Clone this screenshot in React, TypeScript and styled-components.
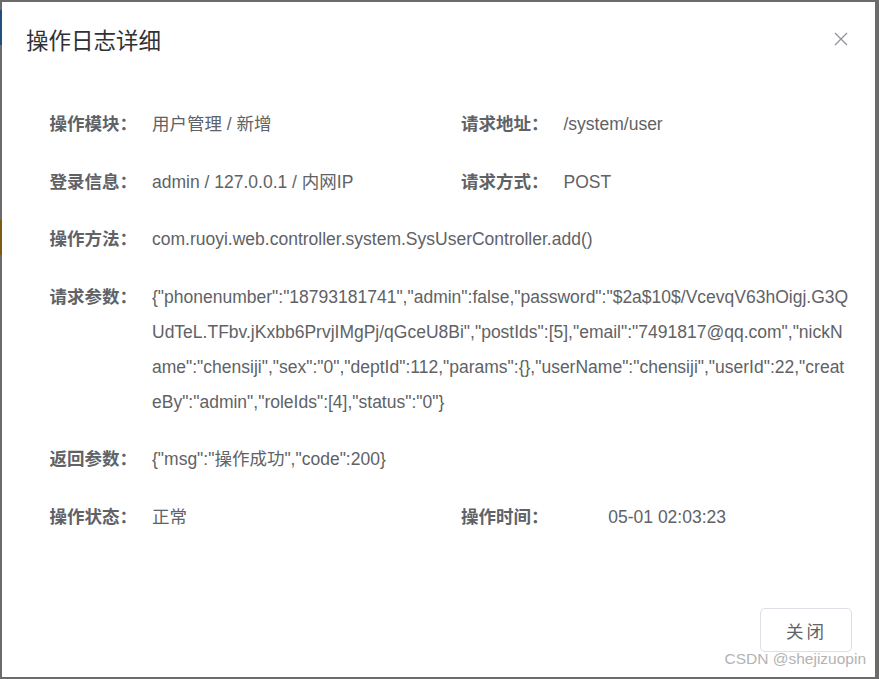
import styled, { createGlobalStyle } from 'styled-components';

const GlobalStyle = createGlobalStyle`
  html, body {
    margin: 0;
    padding: 0;
    background: #6b6b6b;
  }
  * {
    box-sizing: border-box;
  }
`;

const Overlay = styled.div`
  width: 879px;
  height: 679px;
  padding: 2px 4px 2px 2px;
  background:
    linear-gradient(
        to bottom,
        #6b6b6b 0 10px,
        #234f7c 10px 45px,
        #6b6b6b 45px 220px,
        #7d5c12 220px 255px,
        #6b6b6b 255px
      )
      left top / 2px 100% no-repeat,
    #6b6b6b;
`;

const Dialog = styled.div`
  position: relative;
  height: 100%;
  background: #fff;
  display: flex;
  flex-direction: column;
  font-family: 'Liberation Sans', 'Noto Sans CJK SC', sans-serif;
  color: #606266;
`;

const Header = styled.div`
  display: flex;
  justify-content: space-between;
  align-items: flex-start;
  padding: 25px 27px 12.5px 24px;
`;

const Title = styled.span`
  font-size: 22.5px;
  line-height: 30px;
  color: #303133;
`;

const CloseButton = styled.button`
  border: none;
  background: none;
  padding: 0;
  margin-top: 5px;
  width: 14px;
  height: 14px;
  display: flex;
  cursor: pointer;
`;

const Body = styled.div`
  padding: 37.5px 25px 15px;
  display: grid;
  grid-template-columns: 1fr 1fr;
  row-gap: 22.5px;
`;

const FormItem = styled.div<{ $full?: boolean }>`
  display: flex;
  grid-column: ${({ $full }) => ($full ? '1 / span 2' : 'auto')};
  font-size: 17.5px;
  line-height: 35px;
`;

const Label = styled.div`
  flex: 0 0 125px;
  padding-right: 15px;
  text-align: right;
  font-weight: 700;
  color: #606266;
`;

const Value = styled.div`
  flex: 1;
  min-width: 0;
  word-break: break-all;
`;

const Masked = styled.span`
  color: #fff;
`;

const Footer = styled.div`
  display: flex;
  justify-content: flex-end;
  padding: 0 23px;
  margin-top: auto;
  margin-bottom: 25px;
`;

const Button = styled.button`
  height: 44px;
  padding: 0 24px 0 25px;
  font-size: 17.5px;
  font-family: 'Liberation Sans', 'Noto Sans CJK SC', sans-serif;
  color: #606266;
  background: #fff;
  border: 1px solid #dcdfe6;
  border-radius: 5px;
  letter-spacing: 3px;
  cursor: pointer;
`;

const Watermark = styled.span`
  position: absolute;
  right: 9px;
  bottom: 9px;
  font-size: 15.5px;
  color: #b3b3b3;
  font-family: 'Liberation Sans', sans-serif;
`;

const params =
  '{"phonenumber":"18793181741","admin":false,"password":"$2a$10$/VcevqV63hOigj.G3QUdTeL.TFbv.jKxbb6PrvjIMgPj/qGceU8Bi","postIds":[5],"email":"7491817@qq.com","nickName":"chensiji","sex":"0","deptId":112,"params":{},"userName":"chensiji","userId":22,"createBy":"admin","roleIds":[4],"status":"0"}';

const App = () => {
  return (
    <>
      <GlobalStyle />
      <Overlay>
        <Dialog>
          <Header>
            <Title>操作日志详细</Title>
            <CloseButton aria-label="关闭">
              <svg width="14" height="14" viewBox="0 0 14 14">
                <path d="M1 1 L13 13 M13 1 L1 13" stroke="#909399" strokeWidth="1.3" fill="none" />
              </svg>
            </CloseButton>
          </Header>
          <Body>
            <FormItem>
              <Label>操作模块：</Label>
              <Value>用户管理 / 新增</Value>
            </FormItem>
            <FormItem>
              <Label>请求地址：</Label>
              <Value>/system/user</Value>
            </FormItem>
            <FormItem>
              <Label>登录信息：</Label>
              <Value>admin / 127.0.0.1 / 内网IP</Value>
            </FormItem>
            <FormItem>
              <Label>请求方式：</Label>
              <Value>POST</Value>
            </FormItem>
            <FormItem $full>
              <Label>操作方法：</Label>
              <Value>com.ruoyi.web.controller.system.SysUserController.add()</Value>
            </FormItem>
            <FormItem $full>
              <Label>请求参数：</Label>
              <Value>{params}</Value>
            </FormItem>
            <FormItem $full>
              <Label>返回参数：</Label>
              <Value>{'{"msg":"操作成功","code":200}'}</Value>
            </FormItem>
            <FormItem>
              <Label>操作状态：</Label>
              <Value>正常</Value>
            </FormItem>
            <FormItem>
              <Label>操作时间：</Label>
              <Value>
                <Masked>2022-</Masked>05-01 02:03:23
              </Value>
            </FormItem>
          </Body>
          <Footer>
            <Button>关闭</Button>
          </Footer>
          <Watermark>CSDN @shejizuopin</Watermark>
        </Dialog>
      </Overlay>
    </>
  );
};

export default App;
